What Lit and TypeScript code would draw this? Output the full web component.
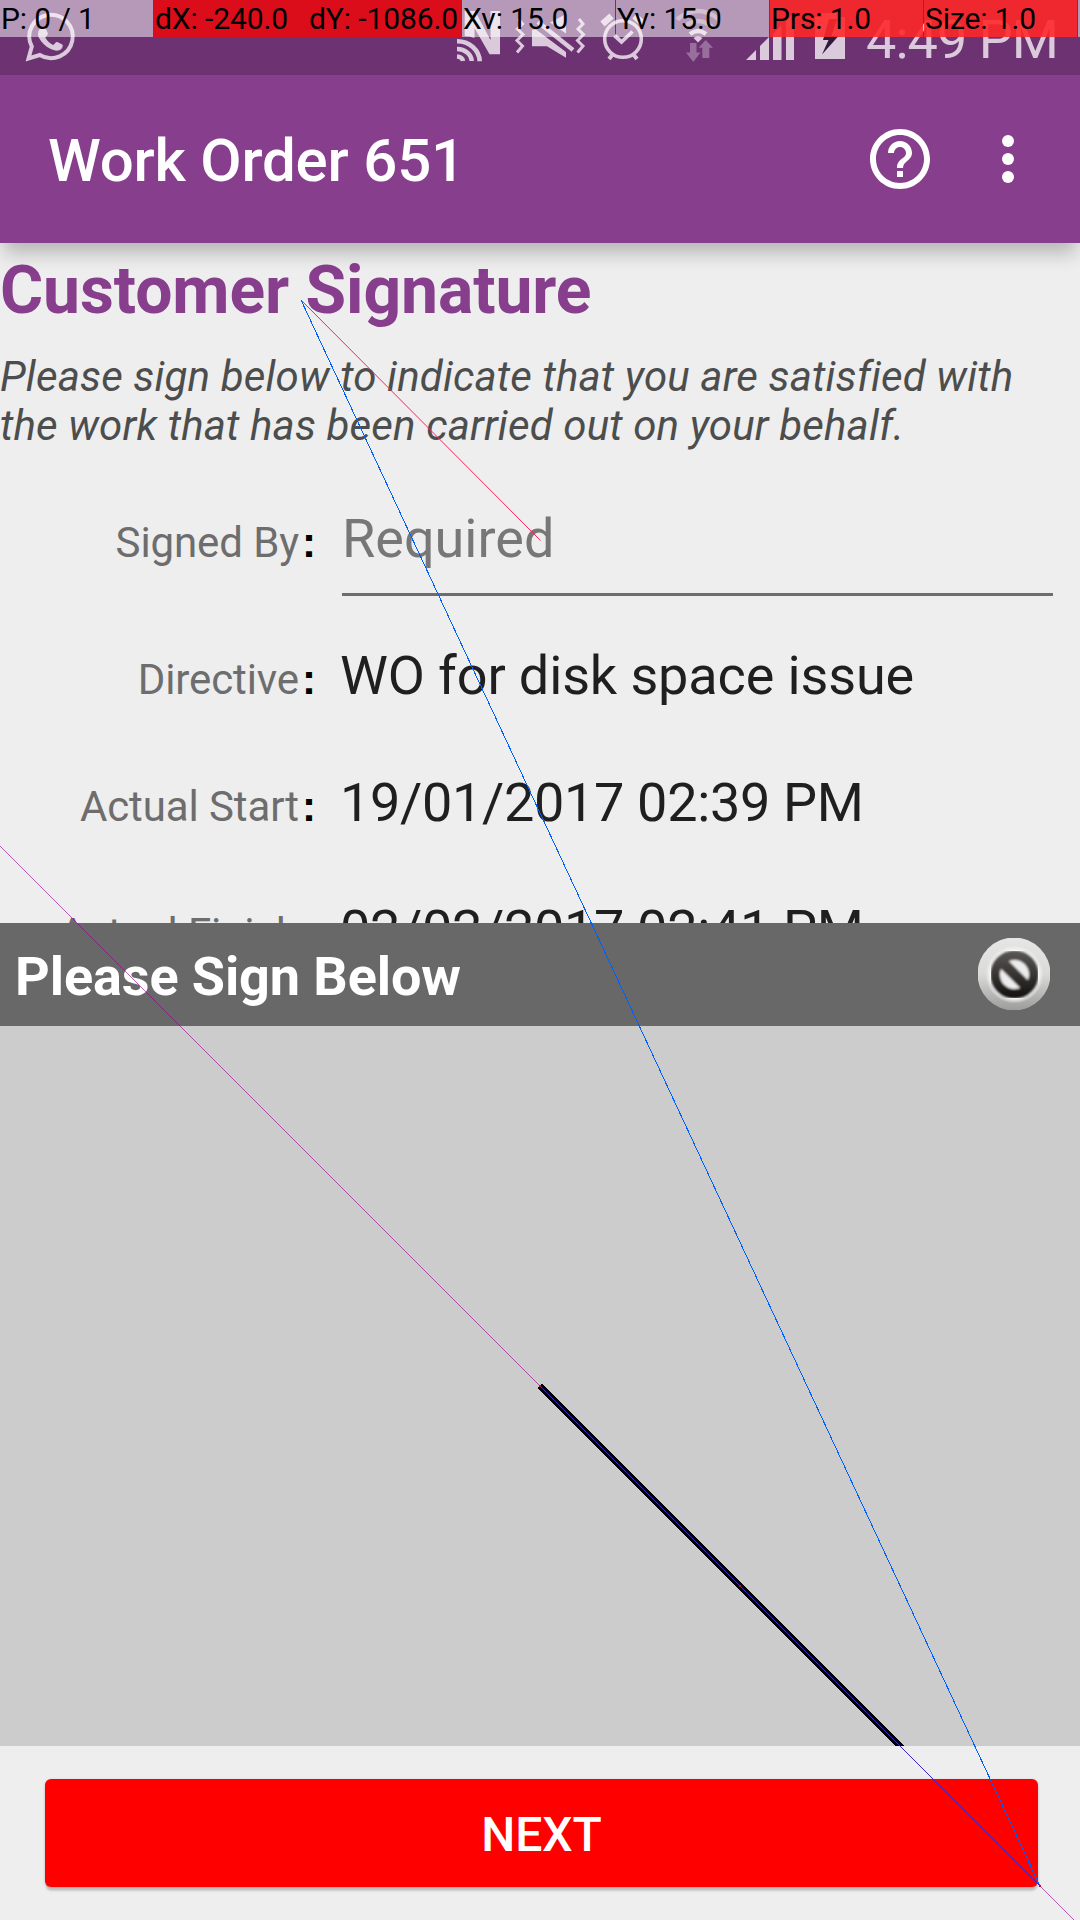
import { LitElement, html, css, svg } from "lit";
import { customElement } from "lit/decorators.js";

interface PointerCell { text: string; tone: string; }
interface DetailRow { label: string; value: string; kind: string; }

@customElement("status-icons")
class StatusIcons extends LitElement {
  static styles = css`
    :host { display: block; }
    svg { display: block; }
    .clock { font-family: Roboto, "Liberation Sans", sans-serif; font-size: 54px; font-weight: 400; }
  `;

  render() {
    const zig = (x: number) => svg`<path fill="none" stroke="#dbc9dc" stroke-width="3"
      transform="translate(${x} 0)" d="M1.5 19l4 5-5 5 5.500 5.500-6 6 5.500 5.500-5.500 6.500"/>`;
    return html`<svg width="1080" height="75" viewBox="0 0 1080 75" fill="#dbc9dc">
      <path fill="none" stroke="#dbc9dc" stroke-width="4" d="M28.500 58.500l3.300-12a21.700 21.700 0 1 1 8 8.500z"/>
      <path d="M41 28c1.500-1.500 3.500-1.500 4.500 0l2.300 5c.5 1.500-1.500 3-2.500 4.500 2 3.700 4.500 6 8 7.500 1.300-1 2.500-3.500 4-3l5 2.500c1 .7.300 3.300-1 4.500-3 2.700-7 1.800-11-.200-5-2.500-9-6.500-11.500-11.300-1.500-3.500-.8-7.500 2.200-9.500z"/>
      <path d="M464.700 11h10.300L490.500 40V11H500v43.300H489.500L474.500 28v10q-5-2-9.800-2z"/>
      <g fill="none" stroke="#dbc9dc" stroke-width="4.600">
        <path d="M457 41.200a22.500 20.500 0 0 1 22.700 20"/>
        <path d="M457 49a14.500 12.500 0 0 1 14.700 12"/>
        <path d="M457 56.500a6.500 5 0 0 1 6 4.500"/>
      </g>
      ${zig(517)}${zig(577.500)}
      <path d="M532 29.500h4l30 22.500V57.700L547 46.200H532z"/>
      <path d="M550 22.500L566 14V33.500z"/>
      <path fill="none" stroke="#dbc9dc" stroke-width="4.500" d="M538 22l35 28"/>
      <g fill="none" stroke="#dbc9dc">
        <circle cx="623" cy="39" r="18.300" stroke-width="3.600"/>
        <path stroke-width="3.800" d="M614.500 35.500l7 6.500 11-10.500"/>
        <path stroke-width="4" d="M613 54l-4 5M633 54l4 5"/>
        <path stroke-width="6.500" d="M602.500 24l9-8M643.500 24l-9-8"/>
      </g>
      <g fill="none" stroke="#dbc9dc">
        <path stroke-width="4.500" d="M677 19.500q21-17 42 0M684 27q14-12 28 0" opacity=".5"/>
        <path stroke-width="4.500" d="M690 34q8-6 16 0"/>
      </g>
      <path d="M693.500 38q4.500-3.500 9 0l-4.500 4.500z"/>
      <path opacity=".4" d="M690 43h6.500v9.500h4L693.300 62 686 52.500h4zM702.300 58h7V47.800h3.700L705.700 40l-7.200 7.800h3.800z"/>
      <path d="M746 60l10-10v10zM760 60V46l9-9v23zM773 60V34l8.500-9v35zM786 60V21l8-8v47z"/>
      <path d="M815 17h7v-4h16v4h7v42h-30z"/>
      <path fill="#30193a" d="M829 19l-6 21h5.500L822 54.500 838.500 36h-7L837 19z"/>
      <text class="clock" x="866" y="58.300" textLength="193" lengthAdjust="spacing">4:49 PM</text>
    </svg>`;
  }
}

@customElement("app-root")
class AppRoot extends LitElement {
  static styles = css`
    :host {
      display: block;
      width: 1080px;
      height: 1920px;
      overflow: hidden;
      font-family: Roboto, "Liberation Sans", sans-serif;
    }
    .screen { position: relative; display: flex; flex-direction: column; width: 1080px; height: 1920px; overflow: hidden; background: #eee; }
    .status { position: relative; flex: none; height: 75px; background: #6c3272; z-index: 2; }
    .pointer { position: absolute; left: 0; top: 0; width: 1080px; height: 37px; display: grid; grid-template-columns: repeat(7, 153px) 3px; column-gap: 1px; }
    .cell { padding-left: 1px; font-size: 30px; line-height: 37px; letter-spacing: -.1px; white-space: pre; color: #000; overflow: hidden; }
    .pale { background: rgba(255, 255, 255, .5); }
    .deep { background: #dc0d1b; }
    .bright { background: rgba(255, 39, 41, .89); }
    .bar { position: relative; flex: none; height: 168px; display: flex; align-items: center; background: #873e8c; color: #fff; box-shadow: 0 14px 18px -4px rgba(0, 0, 0, .24); z-index: 1; }
    .title { flex: 1; padding: 4px 0 0 48px; font-size: 60px; font-weight: 500; line-height: 70px; letter-spacing: -.2px; }
    .action { width: 72px; height: 72px; margin-right: 36px; }
    .form { height: 680px; flex: none; overflow: hidden; display: flex; flex-direction: column; }
    .heading { margin-top: 9px; font-size: 66px; line-height: 78px; font-weight: 700; letter-spacing: -.08px; color: #873e8c; }
    .note { margin-top: 22px; font-size: 42px; line-height: 49px; letter-spacing: .15px; font-style: italic; color: #4c4d4d; white-space: nowrap; }
    .row { flex: none; display: flex; align-items: baseline; height: 127px; line-height: 63px; }
    .row.first { margin-top: 57px; height: 137px; }
    .label { width: 299px; text-align: right; font-size: 42px; letter-spacing: -.1px; color: #6d6d6d; white-space: nowrap; }
    .colon { width: 41px; padding-left: 3px; box-sizing: border-box; font-family: "Liberation Sans", sans-serif; font-size: 42px; font-weight: 700; color: #000; }
    .value { font-size: 54px; color: #1f1f1f; white-space: nowrap; }
    .text { letter-spacing: -.13px; }
    .date { letter-spacing: -.33px; }
    .input { width: 711px; height: 89px; margin-left: 2px; box-sizing: border-box; border-bottom: 3px solid #6d6d6d; color: #777; font-size: 54px; }
    .sign { flex: none; height: 103px; display: flex; align-items: center; justify-content: space-between; padding: 0 30px 0 15px; background: #686868; color: #fff; font-size: 54px; font-weight: 700; letter-spacing: -.1px; }
    .caption { padding-top: 4px; }
    .clear { width: 72px; height: 72px; margin-top: -1px; }
    .pad { flex: none; display: block; width: 1080px; height: 720px; background: #ccc; }
    .footer { flex: 1; padding: 33px 42px 33px 45px; }
    .next { height: 108px; box-sizing: border-box; padding-top: 2px; border-radius: 6px; background: #f00; color: #fff; display: flex; align-items: center; justify-content: center; font-size: 48px; font-weight: 500; letter-spacing: -.1px; box-shadow: 0 5px 2px -1px rgba(0, 0, 0, .15), 0 1px 3px rgba(0, 0, 0, .2); }
    .trace { position: absolute; left: 0; top: 0; z-index: 3; pointer-events: none; }
  `;

  private cells: PointerCell[] = [
    { text: "P: 0 / 1", tone: "pale" },
    { text: "dX: -240.0", tone: "deep" },
    { text: "dY: -1086.0", tone: "deep" },
    { text: "Xv: 15.0", tone: "pale" },
    { text: "Yv: 15.0", tone: "pale" },
    { text: "Prs: 1.0", tone: "bright" },
    { text: "Size: 1.0", tone: "bright" },
    { text: "", tone: "pale" },
  ];

  private rows: DetailRow[] = [
    { label: "Directive", value: "WO for disk space issue", kind: "text" },
    { label: "Actual Start", value: "19/01/2017 02:39 PM", kind: "date" },
    { label: "Actual Finish", value: "02/02/2017 02:41 PM", kind: "date" },
  ];

  render() {
    return html`
      <div class="screen">
        <div class="status">
          <status-icons></status-icons>
          <div class="pointer">${this.cells.map((c) => html`<div class="cell ${c.tone}">${c.text}</div>`)}</div>
        </div>
        <header class="bar">
          <div class="title">Work Order 651</div>
          <svg class="action" viewBox="0 0 24 24" fill="#fff"><path d="M11 18h2v-2h-2v2zm1-16C6.480 2 2 6.480 2 12s4.480 10 10 10 10-4.480 10-10S17.520 2 12 2zm0 18c-4.410 0-8-3.590-8-8s3.590-8 8-8 8 3.590 8 8-3.590 8-8 8zm0-14c-2.210 0-4 1.790-4 4h2c0-1.100.9-2 2-2s2 .9 2 2c0 2-3 1.750-3 5h2c0-2.250 3-2.500 3-5 0-2.210-1.790-4-4-4z"/></svg>
          <svg class="action" viewBox="0 0 24 24" fill="#fff"><circle cx="12" cy="6" r="2"/><circle cx="12" cy="12" r="2"/><circle cx="12" cy="18" r="2"/></svg>
        </header>
        <main class="form">
          <div class="heading">Customer Signature</div>
          <div class="note">Please sign below to indicate that you are satisfied with<br>the work that has been carried out on your behalf.</div>
          <div class="row first"><div class="label">Signed By</div><div class="colon">:</div><div class="input">Required</div></div>
          ${this.rows.map((r) => html`<div class="row"><div class="label">${r.label}</div><div class="colon">:</div><div class="value ${r.kind}">${r.value}</div></div>`)}
        </main>
        <div class="sign">
          <span class="caption">Please Sign Below</span>
          <svg class="clear" viewBox="0 0 72 72">
            <defs>
              <linearGradient id="rim" x1="0" y1="0" x2="0" y2="1"><stop offset="0" stop-color="#e6e6e6"/><stop offset=".5" stop-color="#dadad8"/><stop offset="1" stop-color="#9c9c9c"/></linearGradient>
              <linearGradient id="ink" gradientUnits="userSpaceOnUse" x1="0" y1="13" x2="0" y2="60"><stop offset="0" stop-color="#5a5856"/><stop offset="1" stop-color="#14100e"/></linearGradient>
              <radialGradient id="glow"><stop offset=".82" stop-color="#f6f6f6"/><stop offset="1" stop-color="#f6f6f6" stop-opacity="0"/></radialGradient>
              <filter id="soft"><feGaussianBlur stdDeviation=".8"/></filter>
            </defs>
            <circle cx="36" cy="36" r="36.500" fill="url(#rim)"/>
            <circle cx="36.500" cy="36.500" r="29" fill="url(#glow)"/>
            <g filter="url(#soft)">
              <circle cx="36.500" cy="36.500" r="19.300" fill="#ececec" stroke="url(#ink)" stroke-width="9.500"/>
              <path d="M23 23L50 50" stroke="url(#ink)" stroke-width="11"/>
            </g>
          </svg>
        </div>
        <svg class="pad" viewBox="0 1026 1080 720"><path d="M540 1386L940 1786" stroke="#000" stroke-width="6" shape-rendering="crispEdges"/></svg>
        <div class="footer"><div class="next">NEXT</div></div>
        <svg class="trace" width="1080" height="1920" viewBox="0 0 1080 1920" fill="none" stroke-width="1">
          <path stroke="#900090" stroke-opacity=".62" d="M-.5 845.500L540.500 1386.500M1040.500 1886.500L1080.500 1926.500"/>
          <path stroke="#4020c8" d="M540.500 1386.500L1040.500 1886.500"/>
          <path stroke="#ff2060" d="M301.500 300.500L540.500 540.500"/>
          <path stroke="#0060ff" shape-rendering="crispEdges" d="M301 300L1040 1886"/>
          <path fill="#d00028" d="M539 1385h2v2h-2zM739 1585h2v2h-2zM1039 1885h2v2h-2z"/>
        </svg>
      </div>`;
  }
}
